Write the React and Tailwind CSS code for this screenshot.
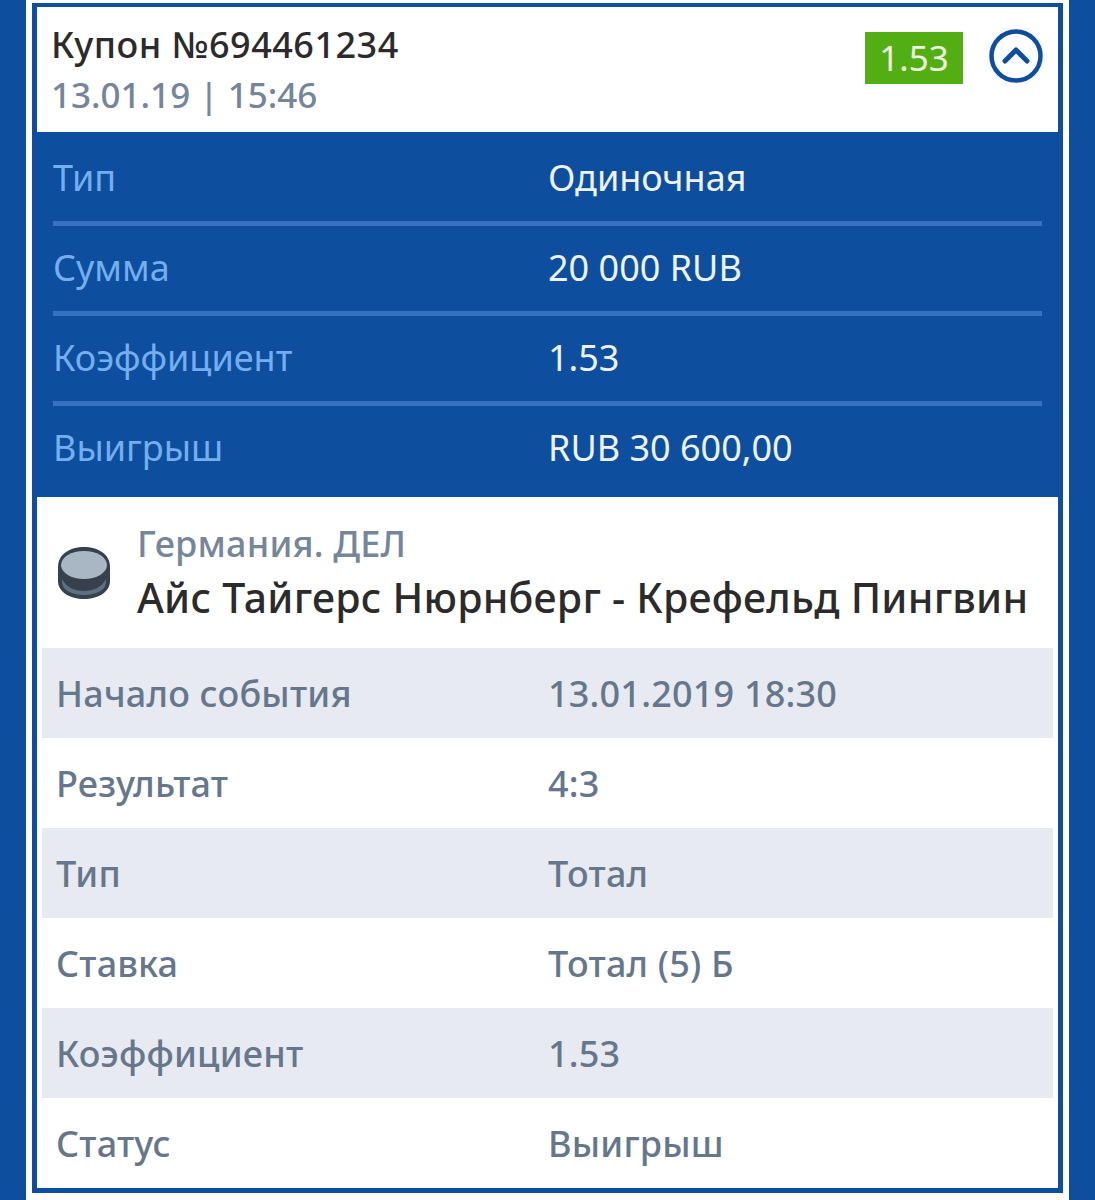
import React from 'react';

const summary = [
  ['Тип', 'Одиночная'],
  ['Сумма', '20 000 RUB'],
  ['Коэффициент', '1.53'],
  ['Выигрыш', 'RUB 30 600,00'],
];

const details = [
  ['Начало события', '13.01.2019 18:30'],
  ['Результат', '4:3'],
  ['Тип', 'Тотал'],
  ['Ставка', 'Тотал (5) Б'],
  ['Коэффициент', '1.53'],
  ['Статус', 'Выигрыш'],
];

function Puck() {
  return (
    <svg width="56" height="56" viewBox="0 0 56 56">
      <path d="M2 22 C2 9 14 2 28 2 C42 2 54 9 54 22 V36 C54 47 42 54 28 54 C14 54 2 47 2 36 Z" fill="#36414d" />
      <path d="M6 34 C10 42 18 46 28 46 C38 46 46 42 50 34 V37 C50 45 40 50 28 50 C16 50 6 45 6 37 Z" fill="#5f7083" />
      <ellipse cx="28" cy="20" rx="23" ry="14" fill="#a9b6c4" />
    </svg>
  );
}

function ChevronCircle() {
  return (
    <svg className="-mt-[3px]" width="54" height="54" viewBox="0 0 54 54" fill="none">
      <circle cx="27" cy="27" r="24.5" stroke="#0d4f9e" strokeWidth="4.5" />
      <path d="M16 32 L27 21 L38 32" stroke="#0d4f9e" strokeWidth="5" strokeLinecap="round" strokeLinejoin="round" />
    </svg>
  );
}

export default function App() {
  return (
    <div className="w-[1095px] h-[1200px] overflow-hidden bg-[#0d4f9e] px-[26px] font-['Noto_Sans',sans-serif]">
      <div className="h-full bg-white px-[6px] pt-[3px]">
        <div className="h-[1190px] border-[5px] border-t-[4px] border-[#0d4f9e] bg-white">
          {/* шапка купона */}
          <div className="h-[125px] flex justify-between pl-[14px] pr-[15px]">
            <div className="pt-[15px]">
              <div className="text-[36px] leading-[46px] tracking-[0.5px] font-medium text-[#2b2b2b]">Купон №694461234</div>
              <div className="text-[35px] leading-[54px] font-medium text-[#76869a]">13.01.19 | 15:46</div>
            </div>
            <div className="flex items-start gap-[26px] pt-[25px]">
              <div className="w-[98px] h-[52px] bg-[#52ae13] text-[#eef7e0] text-[35px] flex items-center justify-center">1.53</div>
              <ChevronCircle />
            </div>
          </div>

          {/* итог */}
          <div className="bg-[#0d4f9e] h-[365px] px-[16px] pt-[4px]">
            {summary.map(([label, value], i) => (
              <div key={label} className={`h-[90px] flex items-center pb-[2px] border-b-[5px] ${i < 3 ? 'border-[#3572c0]' : 'border-transparent'}`}>
                <div className="w-[495px] text-[36px] text-[#74aeee]">{label}</div>
                <div className="text-[36px] text-[#eef3f9]">{value}</div>
              </div>
            ))}
          </div>

          {/* событие */}
          <div className="h-[151px] flex items-center pl-[19px]">
            <Puck />
            <div className="ml-[25px] mt-[6px]">
              <div className="text-[36px] leading-[42px] tracking-[0.2px] font-medium text-[#76869a]">Германия. ДЕЛ</div>
              <div className="text-[41px] leading-[64px] tracking-[0.25px] font-medium text-[#2b2b2b] whitespace-nowrap">Айс Тайгерс Нюрнберг - Крефельд Пингвин</div>
            </div>
          </div>

          <div className="mx-[5px]">
            {details.map(([label, value], i) => (
              <div key={label} className={`h-[90px] flex items-center pl-[14px] pt-[1px] text-[36px] tracking-[0.2px] font-medium text-[#66778c] ${i % 2 === 0 ? 'bg-[#e7eaf0]' : ''}`}>
                <div className="w-[492px]">{label}</div>
                <div>{value}</div>
              </div>
            ))}
          </div>
        </div>
      </div>
    </div>
  );
}
